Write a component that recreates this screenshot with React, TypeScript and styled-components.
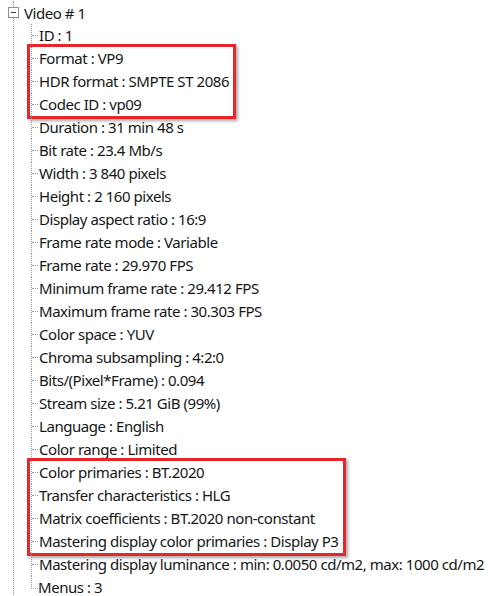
import React from "react";
import styled, { createGlobalStyle } from "styled-components";

const GlobalStyle = createGlobalStyle`
  html, body {
    margin: 0;
    padding: 0;
    background: #ffffff;
  }
  body {
    font-family: "Noto Sans", "Open Sans", Arial, sans-serif;
    color: #161616;
  }
`;

const Page = styled.div({
  width: "500px",
  height: "596px",
  overflow: "hidden",
  paddingTop: "1px",
  boxSizing: "border-box",
});

const Tree = styled.div({
  marginLeft: "13px",
  borderLeft: "1px dotted #9a9a9a",
  minHeight: "620px",
});

const NodeHeader = styled.div({
  display: "flex",
  alignItems: "center",
  height: "23px",
  gap: "5px",
});

const Toggle = styled.span({
  width: "9px",
  height: "9px",
  marginLeft: "-6px",
  border: "1px solid #8f8f8f",
  background: "#fff",
  display: "flex",
  alignItems: "center",
  justifyContent: "center",
  flexShrink: 0,
  "&::before": {
    content: '""',
    width: "5px",
    height: "1px",
    background: "#2f3b4a",
  },
});

const Label = styled.span({
  fontSize: "15px",
  letterSpacing: "-0.45px",
  whiteSpace: "nowrap",
});

const Children = styled.div({
  marginLeft: "17px",
  display: "flex",
  flexDirection: "column",
});

const Row = styled.div<{ $last?: boolean }>(({ $last }) => ({
  display: "flex",
  alignItems: $last ? "flex-start" : "center",
  height: "23px",
  borderLeft: $last ? "none" : "1px dotted #9a9a9a",
  fontSize: "15px",
  letterSpacing: "-0.45px",
  whiteSpace: "nowrap",
}));

const Tick = styled.span<{ $last?: boolean }>(({ $last }) => ({
  width: "6px",
  height: $last ? "12px" : "0",
  borderBottom: "1px dotted #9a9a9a",
  borderLeft: $last ? "1px dotted #9a9a9a" : "none",
  marginRight: $last ? "0" : "1px",
  flexShrink: 0,
}));

const Text = styled.span({
  lineHeight: "23px",
});

const Group = styled.div({
  width: "fit-content",
  margin: "-3px 0 -3px -4px",
  padding: "0 4px 0 1px",
  border: "3px solid #e5262b",
  boxShadow: "2px 2px 3px rgba(0, 0, 0, 0.35)",
  display: "flex",
  flexDirection: "column",
});

type Item = [string, string];

const before: Item[] = [["ID", "1"]];
const first: Item[] = [
  ["Format", "VP9"],
  ["HDR format", "SMPTE ST 2086"],
  ["Codec ID", "vp09"],
];
const middle: Item[] = [
  ["Duration", "31 min 48 s"],
  ["Bit rate", "23.4 Mb/s"],
  ["Width", "3 840 pixels"],
  ["Height", "2 160 pixels"],
  ["Display aspect ratio", "16:9"],
  ["Frame rate mode", "Variable"],
  ["Frame rate", "29.970 FPS"],
  ["Minimum frame rate", "29.412 FPS"],
  ["Maximum frame rate", "30.303 FPS"],
  ["Color space", "YUV"],
  ["Chroma subsampling", "4:2:0"],
  ["Bits/(Pixel*Frame)", "0.094"],
  ["Stream size", "5.21 GiB (99%)"],
  ["Language", "English"],
  ["Color range", "Limited"],
];
const second: Item[] = [
  ["Color primaries", "BT.2020"],
  ["Transfer characteristics", "HLG"],
  ["Matrix coefficients", "BT.2020 non-constant"],
  ["Mastering display color primaries", "Display P3"],
];
const after: Item[] = [
  ["Mastering display luminance", "min: 0.0050 cd/m2, max: 1000 cd/m2"],
  ["Menus", "3"],
];

const rows = (items: Item[], lastKey?: string) =>
  items.map(([k, v]) => {
    const last = k === lastKey;
    return (
      <Row key={k} $last={last}>
        <Tick $last={last} />
        <Text>
          {k} : {v}
        </Text>
      </Row>
    );
  });

export default function App() {
  return (
    <Page>
      <GlobalStyle />
      <Tree>
        <NodeHeader>
          <Toggle />
          <Label>Video # 1</Label>
        </NodeHeader>
        <Children>
          {rows(before)}
          <Group>{rows(first)}</Group>
          {rows(middle)}
          <Group>{rows(second)}</Group>
          {rows(after, "Menus")}
        </Children>
      </Tree>
    </Page>
  );
}
